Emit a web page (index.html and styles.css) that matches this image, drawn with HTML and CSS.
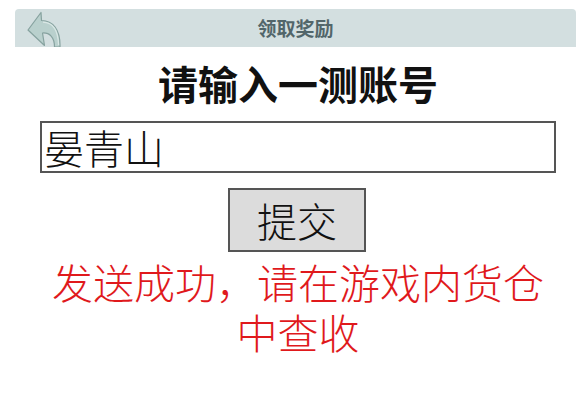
FILE: index.html
```html
<!DOCTYPE html>
<html lang="zh-CN">
<head>
<meta charset="utf-8">
<title>领取奖励</title>
<link rel="stylesheet" href="styles.css">
</head>
<body>
<header class="topbar">
  <div class="back">
    <svg class="back-icon" viewBox="0 0 40 38" width="40" height="38">
      <path d="M1,21 L14,3.5 L14.5,11.5 C25.5,11.5 33.5,20 33,38 L27.5,38 C27.5,28 22.5,23.5 15.5,24 L17.5,36.5 Z" fill="#b9d0cd" stroke="#86a29f" stroke-width="1.2" stroke-linejoin="round"/>
      <path d="M16,13.2 C24.5,13.5 31,20 31.6,36" fill="none" stroke="#d9e7e5" stroke-width="1.2"/>
    </svg>
  </div>
  <div class="title">领取奖励</div>
  <div class="spacer"></div>
</header>
<main class="content">
  <h1 class="heading">请输入一测账号</h1>
  <input class="account" type="text" value="晏青山">
  <button class="submit" type="button">提交</button>
  <p class="message">发送成功，请在游戏内货仓中查收</p>
</main>
</body>
</html>
```
FILE: styles.css
```css
html, body {
  margin: 0;
  padding: 0;
  background: #ffffff;
}
body {
  font-family: "Noto Sans CJK SC", "Noto Sans", sans-serif;
  color: #111;
}
.topbar {
  margin: 9px 8px 0 15px;
  height: 38px;
  background: #d3dfe0;
  border-radius: 4px 4px 0 0;
  display: grid;
  grid-template-columns: 1fr auto 1fr;
  align-items: center;
}
.back {
  display: flex;
  align-items: flex-start;
  height: 38px;
  padding-left: 12px;
}
.back-icon {
  display: block;
}
.title {
  font-size: 19px;
  font-weight: 700;
  color: #52666a;
  line-height: 38px;
}
.content {
  width: 516px;
  margin: 0 0 0 40px;
  display: flex;
  flex-direction: column;
  align-items: center;
}
.heading {
  margin: 12px 0 0;
  font-size: 40px;
  line-height: 48px;
  font-weight: 700;
  color: #111;
}
.account {
  box-sizing: border-box;
  width: 516px;
  height: 52px;
  margin: 14px 0 0;
  padding: 0 0 0 2px;
  border: 2px solid #555;
  font-family: inherit;
  font-size: 40px;
  font-weight: 300;
  color: #111;
  background: #fff;
  outline: none;
}
.submit {
  box-sizing: border-box;
  width: 138px;
  height: 64px;
  margin: 15px 0 0 -2px;
  padding: 0;
  border: 2px solid #555;
  background: #dcdcdc;
  font-family: inherit;
  font-size: 40px;
  font-weight: 300;
  line-height: 1;
  color: #111;
}
.message {
  margin: 4px 0 0;
  width: 516px;
  text-align: center;
  font-size: 41px;
  font-weight: 300;
  line-height: 50px;
  color: #e0191c;
}
```
